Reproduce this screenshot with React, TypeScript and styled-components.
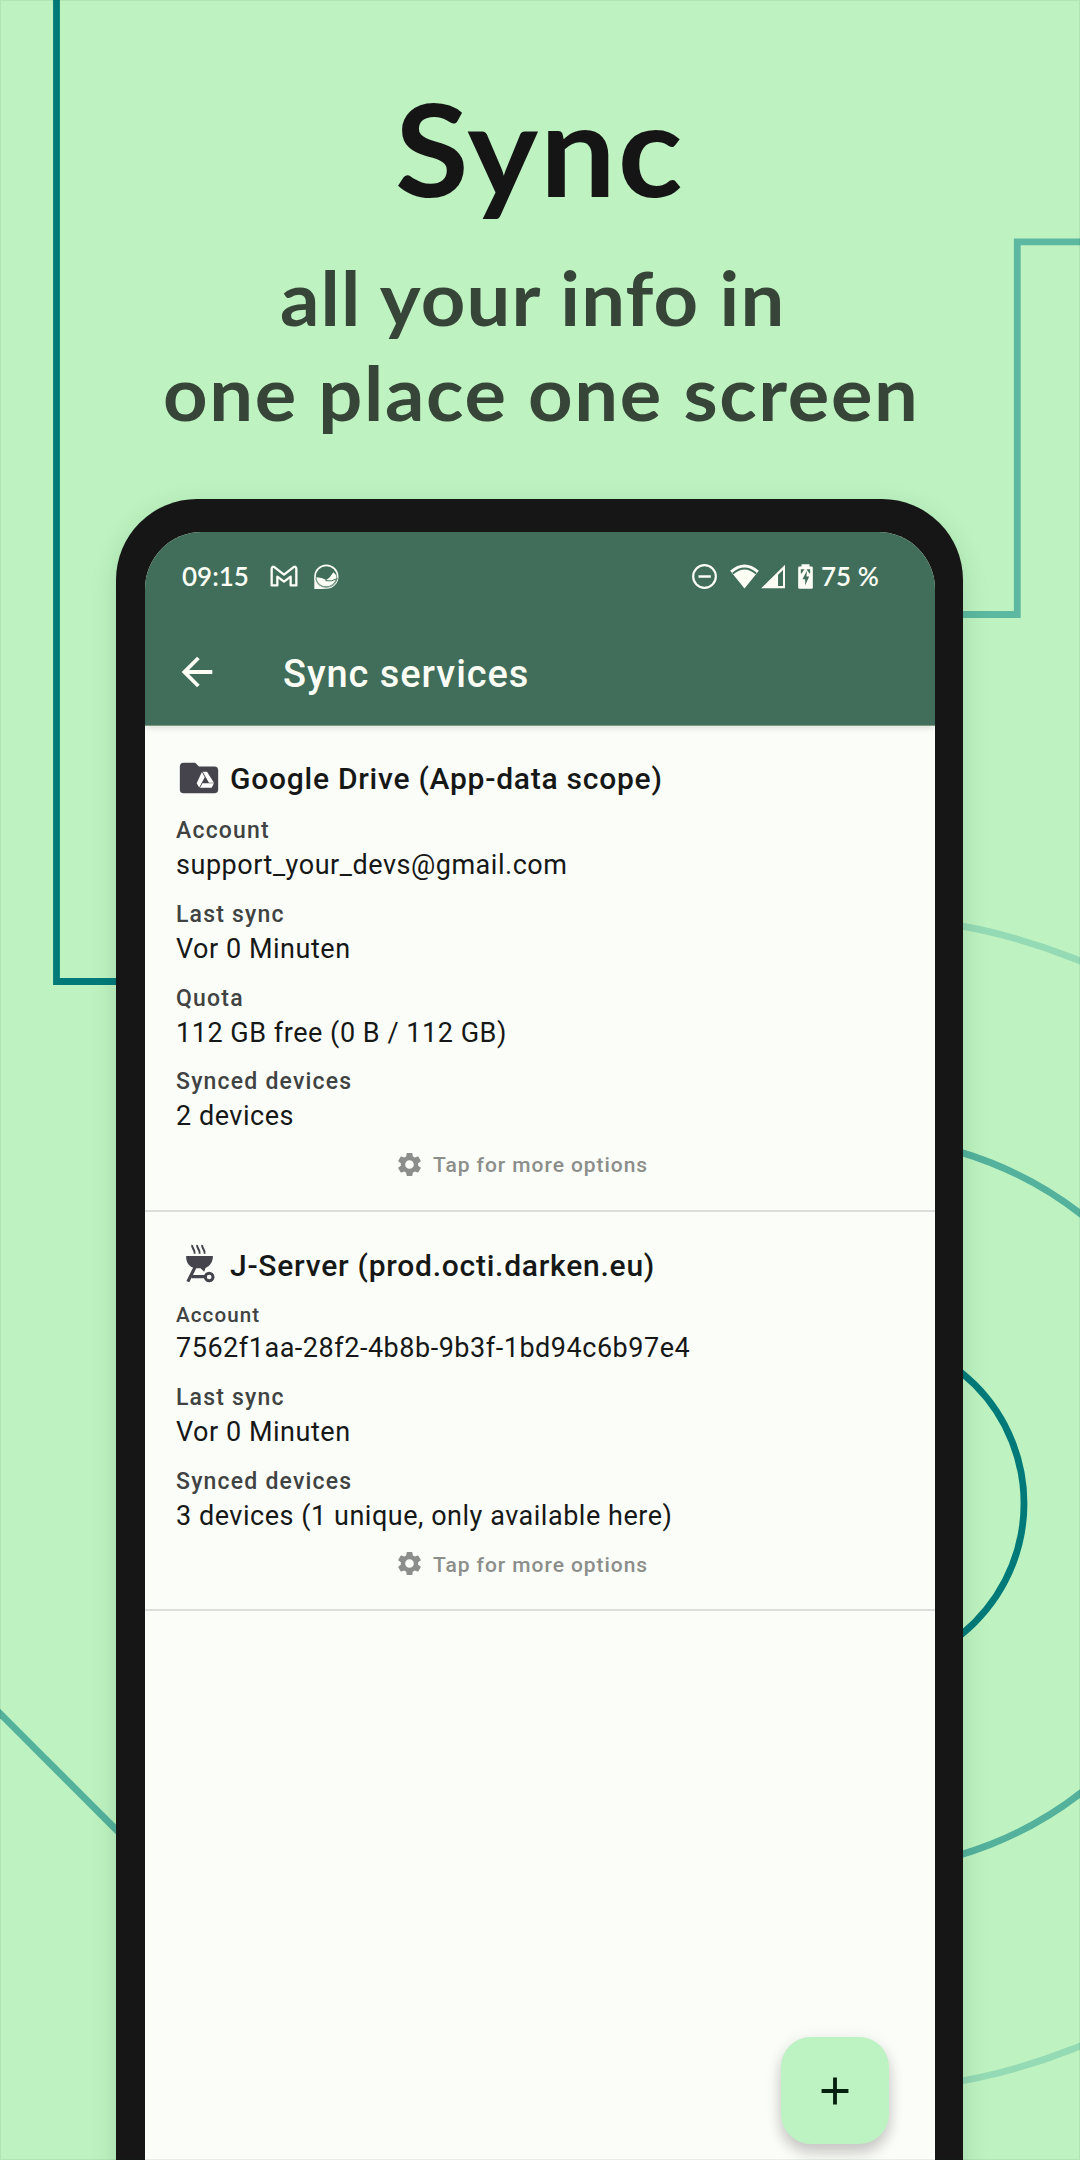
import React from 'react';
import styled, { createGlobalStyle } from 'styled-components';
import { MdAdd, MdArrowBack, MdSettings } from 'react-icons/md';

const color = {
  mint: '#bef3c1',
  frame: '#161616',
  bar: '#406e5a',
  onBar: '#fcfdf5',
  surface: '#fbfdf8',
  line: '#dcdedb',
  ink: '#161817',
  label: '#404342',
  muted: '#8c8e8b',
  glyph: '#45444c',
};

const GlobalStyle = createGlobalStyle`
  *, *::before, *::after { box-sizing: border-box; }
  body { margin: 0; background: ${color.mint}; }
`;

const Page = styled.main`
  position: relative;
  width: 1080px;
  height: 2160px;
  overflow: hidden;
  background: ${color.mint};
  font-family: Roboto, 'Liberation Sans', sans-serif;

  &::after {
    content: '';
    position: absolute;
    inset: 0;
    border: 1px solid rgba(0, 60, 30, 0.07);
    pointer-events: none;
  }
`;

const Backdrop = styled.svg`
  position: absolute;
  inset: 0;
`;

const Poster = styled.div`
  position: relative;
  display: flex;
  flex-direction: column;
  align-items: center;
`;

const Hero = styled.header`
  display: flex;
  flex-direction: column;
  align-items: center;
  height: 499px;
  padding-top: 73px;
  font-family: Lato, 'Open Sans', sans-serif;
  font-weight: 700;
  white-space: nowrap;
`;

const HeroTitle = styled.h1`
  margin: 0 0 27px;
  color: #151515;
  font-size: 128px;
  font-weight: 700;
  line-height: 150px;
  letter-spacing: 1.8px;
  transform: scaleX(1.05);
`;

const HeroLine = styled.p<{ $offset: number; $tracking: number }>`
  margin: 0 0 0 ${({ $offset }) => $offset}px;
  color: #374538;
  font-size: 74px;
  line-height: 95px;
  letter-spacing: ${({ $tracking }) => $tracking}px;
  transform: scaleX(1.05);
`;

const Phone = styled.section`
  display: flex;
  width: 847px;
  height: 1700px;
  margin-right: 1px;
  padding: 33px 28px 0 29px;
  border-radius: 81px 81px 0 0;
  background: ${color.frame};
  box-shadow: 0 8px 26px rgba(20, 60, 40, 0.16);
`;

const Screen = styled.div`
  position: relative;
  flex: 1;
  display: flex;
  flex-direction: column;
  overflow: hidden;
  border-radius: 57px 57px 0 0;
  background: ${color.surface};
`;

const Camera = styled.span`
  position: absolute;
  top: 33px;
  left: 376px;
  width: 37px;
  height: 37px;
  border-radius: 50%;
  background: ${color.frame};
`;

const TopArea = styled.div`
  z-index: 1;
  height: 194px;
  border-bottom: 1px solid #7c9b80;
  background: ${color.bar};
  color: ${color.onBar};
  box-shadow: 0 1px 7px rgba(20, 40, 20, 0.16);
`;

const StatusBar = styled.div`
  display: flex;
  align-items: center;
  justify-content: space-between;
  height: 88px;
  padding: 0 55px 0 37px;
  font-family: Lato, 'Open Sans', sans-serif;
  font-size: 26px;
  font-weight: 600;
  line-height: 30px;
`;

const StatusGroup = styled.div`
  display: flex;
  align-items: center;
`;

const StatusText = styled.span<{ $width: number }>`
  width: ${({ $width }) => $width}px;
  white-space: nowrap;
`;

const StatusIcon = styled.svg<{ $after?: number }>`
  display: block;
  flex: none;
  margin-right: ${({ $after = 0 }) => $after}px;
`;

const AppBar = styled.div`
  display: flex;
  align-items: center;
  gap: 63px;
  height: 104px;
  padding: 0 29px;
`;

const AppTitle = styled.h2`
  margin: 0;
  padding-top: 3px;
  font-size: 38px;
  font-weight: 500;
  line-height: 48px;
  letter-spacing: 0.95px;
`;

const Card = styled.article<{ $top: number }>`
  padding: ${({ $top }) => $top}px 31px 30.4px;
  border-bottom: 2px solid ${color.line};
`;

const CardHeader = styled.div<{ $gap: number }>`
  display: flex;
  align-items: center;
  gap: 8px;
  height: 46px;
  margin-bottom: ${({ $gap }) => $gap}px;
`;

const CardTitle = styled.h3`
  margin: 0;
  padding-top: 2px;
  color: ${color.ink};
  font-size: 30px;
  font-weight: 500;
  line-height: 40px;
  letter-spacing: 0.75px;
  white-space: nowrap;
`;

const Fields = styled.dl`
  display: flex;
  flex-direction: column;
  gap: 14.8px;
  margin: 0;
`;

const Label = styled.dt<{ $compact?: boolean }>`
  color: ${color.label};
  font-size: ${({ $compact }) => ($compact ? 20.6 : 23)}px;
  font-weight: 500;
  line-height: ${({ $compact }) => ($compact ? 31.5 : 34)}px;
  letter-spacing: ${({ $compact }) => ($compact ? 1.1 : 1.2)}px;
`;

const Value = styled.dd`
  margin: 0;
  color: ${color.ink};
  font-size: 27px;
  line-height: 35px;
  letter-spacing: 0.53px;
  white-space: nowrap;
`;

const Hint = styled.div`
  display: flex;
  align-items: center;
  gap: 9.5px;
  height: 30px;
  margin-top: 15px;
  padding-left: 218.5px;
  color: ${color.muted};
`;

const HintText = styled.span`
  padding-top: 2px;
  font-size: 21px;
  font-weight: 500;
  line-height: 28px;
  letter-spacing: 0.95px;
`;

const Fab = styled.button`
  position: absolute;
  top: 1505px;
  right: 46px;
  display: grid;
  place-items: center;
  width: 108px;
  height: 107px;
  padding: 0;
  border: 0;
  border-radius: 30px;
  background: #bdf2c2;
  color: #06200f;
  box-shadow: 0 9px 14px rgba(30, 20, 30, 0.2), 0 2px 18px rgba(30, 20, 30, 0.07);
`;

function Decorations() {
  return (
    <Backdrop width="1080" height="2160" fill="none" strokeWidth="6.8">
      <path d="M56.5 -10V981.5H200" stroke="#007a79" />
      <path d="M1090 241.8H1017.3V614.5H940" stroke="#5cb8a0" />
      <circle cx="856" cy="1503.5" r="168" stroke="#007a79" />
      <circle cx="856" cy="1503.5" r="366.5" stroke="#53b19c" />
      <circle cx="856" cy="1503.5" r="587" stroke="#94dab4" />
      <path d="M-10 1703.5L150 1863.5" stroke="#53b19c" />
    </Backdrop>
  );
}

function MailGlyph() {
  return (
    <StatusIcon $after={15.5} width="28" height="22" viewBox="480 226 84 66" fill="none" stroke="currentColor" strokeWidth="7" strokeLinejoin="round">
      <path d="M485 287V238Q485 228 494 233L522 255L550 233Q559 228 559 238V287H542V261L522 276L502 261V287Z" />
    </StatusIcon>
  );
}

function BubbleGlyph() {
  return (
    <StatusIcon width="25" height="25" viewBox="612 221 75 75">
      <circle cx="649" cy="259" r="34" fill="none" stroke="currentColor" strokeWidth="5" />
      <path d="M613 262V296H649Q622 292 617 266Z" fill="currentColor" />
      <path d="M619 261Q636 261 649 269Q661 262 670 246Q680 252 679 264A31 31 0 0 1 619 266Z" fill="currentColor" />
      <path d="M646 271Q664 275 682 265" fill="none" stroke={color.bar} strokeWidth="3" />
      <path d="M617 262Q620 290 649 291Q678 290 682 262" fill="none" stroke={color.bar} strokeWidth="2" />
    </StatusIcon>
  );
}

function DisturbGlyph() {
  return (
    <StatusIcon $after={13} width="25" height="25" viewBox="573.5 220.5 75 75" fill="none" stroke="currentColor" strokeWidth="6.5">
      <circle cx="611" cy="258" r="34" />
      <path d="M593 258H630" strokeWidth="7" />
    </StatusIcon>
  );
}

function WifiGlyph() {
  return (
    <StatusIcon $after={2.3} width="29" height="25" viewBox="688.5 218.5 87 75">
      <path d="M689 239Q732 201 775 239L732 292Z" fill="currentColor" />
      <path d="M697 247Q732 217 767 247" fill="none" stroke={color.bar} strokeWidth="5.5" />
    </StatusIcon>
  );
}

function SignalGlyph() {
  return (
    <StatusIcon $after={13} width="24.5" height="25" viewBox="781.5 220 74 75">
      <path d="M782 293L855 221V293Z" fill="currentColor" />
      <path d="M833 252L848 238V286H833Z" fill={color.bar} />
    </StatusIcon>
  );
}

function BatteryGlyph() {
  return (
    <StatusIcon $after={7.6} width="15" height="25" viewBox="894.5 219.5 45 75">
      <path d="M905 220H929V227H935Q939 227 939 231V290Q939 294 935 294H899Q895 294 895 290V231Q895 227 899 227H905Z" fill="currentColor" />
      <path d="M921 240L908 265H916V283L928 257H920Z" fill={color.bar} />
      <path d="M903 235H914L905 248H903ZM920 235H931V248H929Z" fill={color.bar} />
    </StatusIcon>
  );
}

function DriveFolderIcon() {
  return (
    <svg width="46" height="46" viewBox="0 0 24 24">
      <path d="M10 4H4A2 2 0 0 0 2 6V18A2 2 0 0 0 4 20H20A2 2 0 0 0 22 18V8A2 2 0 0 0 20 6H12Z" fill={color.glyph} />
      <g fill="#fff">
        <path d="M13.5 8.9L10.8 14.7L12.1 16.9L15 11.6Z" />
        <path d="M13.9 8.7H16.2L19.8 14.5H17.2Z" />
        <path d="M13.8 14.8H19.8L18.6 17.1H12.5Z" />
      </g>
    </svg>
  );
}

function GrillIcon() {
  return (
    <svg width="46" height="46" viewBox="10.5 18 138 138" fill="none" stroke={color.glyph}>
      <g strokeWidth="6">
        <path d="M59 27C57 37 69 41 66 53" />
        <path d="M74 27C72 37 84 41 81 53" />
        <path d="M89 27C87 37 99 41 96 53" />
      </g>
      <path d="M41 60H121V66C119 81 110 91 99 96L95 107L84 97H66C50 92 42 80 41 66Z" fill={color.glyph} stroke="none" />
      <path d="M67 95L46 137M58 122H98" strokeWidth="9.5" />
      <circle cx="110" cy="123" r="11.5" strokeWidth="9" />
    </svg>
  );
}

type Field = { label: string; value: string; compact?: boolean };

type Service = {
  title: string;
  icon: React.ReactNode;
  top: number;
  gap: number;
  fields: Field[];
};

const services: Service[] = [
  {
    title: 'Google Drive (App-data scope)',
    icon: <DriveFolderIcon />,
    top: 29,
    gap: 13,
    fields: [
      { label: 'Account', value: 'support_your_devs@gmail.com' },
      { label: 'Last sync', value: 'Vor 0 Minuten' },
      { label: 'Quota', value: '112 GB free (0 B / 112 GB)' },
      { label: 'Synced devices', value: '2 devices' },
    ],
  },
  {
    title: 'J-Server (prod.octi.darken.eu)',
    icon: <GrillIcon />,
    top: 30,
    gap: 12,
    fields: [
      { label: 'Account', value: '7562f1aa-28f2-4b8b-9b3f-1bd94c6b97e4', compact: true },
      { label: 'Last sync', value: 'Vor 0 Minuten' },
      { label: 'Synced devices', value: '3 devices (1 unique, only available here)' },
    ],
  },
];

function ServiceCard({ service }: { service: Service }) {
  return (
    <Card $top={service.top}>
      <CardHeader $gap={service.gap}>
        {service.icon}
        <CardTitle>{service.title}</CardTitle>
      </CardHeader>
      <Fields>
        {service.fields.map((field) => (
          <div key={field.label}>
            <Label $compact={field.compact}>{field.label}</Label>
            <Value>{field.value}</Value>
          </div>
        ))}
      </Fields>
      <Hint>
        <MdSettings size={29} />
        <HintText>Tap for more options</HintText>
      </Hint>
    </Card>
  );
}

export default function App() {
  return (
    <Page>
      <GlobalStyle />
      <Decorations />
      <Poster>
        <Hero>
          <HeroTitle>Sync</HeroTitle>
          <HeroLine $offset={-14} $tracking={1.15}>all your info in</HeroLine>
          <HeroLine $offset={3} $tracking={1.55}>one place one screen</HeroLine>
        </Hero>
        <Phone>
          <Screen>
            <TopArea>
              <StatusBar>
                <StatusGroup>
                  <StatusText $width={88}>09:15</StatusText>
                  <MailGlyph />
                  <BubbleGlyph />
                </StatusGroup>
                <StatusGroup>
                  <DisturbGlyph />
                  <WifiGlyph />
                  <SignalGlyph />
                  <BatteryGlyph />
                  <StatusText $width={59}>75 %</StatusText>
                </StatusGroup>
              </StatusBar>
              <AppBar>
                <MdArrowBack size={46} />
                <AppTitle>Sync services</AppTitle>
              </AppBar>
            </TopArea>
            {services.map((service) => (
              <ServiceCard key={service.title} service={service} />
            ))}
            <Camera />
            <Fab aria-label="Add">
              <MdAdd size={46} />
            </Fab>
          </Screen>
        </Phone>
      </Poster>
    </Page>
  );
}
